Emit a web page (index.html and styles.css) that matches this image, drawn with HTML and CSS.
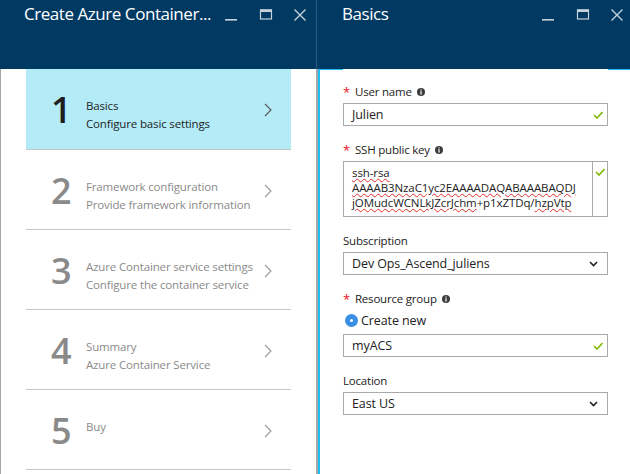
FILE: index.html
```html
<!DOCTYPE html>
<html lang="en">
<head>
<meta charset="utf-8">
<title>Create Azure Container Service</title>
<link rel="stylesheet" href="styles.css">
</head>
<body>
<div class="app">
  <section class="blade blade-steps">
    <header class="blade-header">
      <h1 class="blade-title">Create Azure Container...</h1>
      <div class="win-controls">
        <svg class="ctl ctl-min" width="14" height="14" viewBox="0 0 14 14"><rect x="1" y="11" width="12" height="1.6" fill="currentColor"/></svg>
        <svg class="ctl ctl-max" width="14" height="14" viewBox="0 0 14 14"><rect x="1.5" y="2" width="11" height="9" fill="none" stroke="currentColor" stroke-width="1.2"/><rect x="1" y="1.4" width="12" height="2.6" fill="currentColor"/></svg>
        <svg class="ctl ctl-close" width="14" height="14" viewBox="0 0 14 14"><path d="M1.5 1.5 L12.5 12.5 M12.5 1.5 L1.5 12.5" stroke="currentColor" stroke-width="1.4" fill="none"/></svg>
      </div>
    </header>
    <ol class="steps">
      <li class="step active">
        <span class="num">1</span>
        <div class="step-text"><div>Basics</div><div>Configure basic settings</div></div>
        <svg class="chev" width="8" height="14" viewBox="0 0 8 14"><path d="M1 1 L7 7 L1 13" fill="none" stroke="currentColor" stroke-width="1.1"/></svg>
      </li>
      <li class="step">
        <span class="num">2</span>
        <div class="step-text"><div>Framework configuration</div><div>Provide framework information</div></div>
        <svg class="chev" width="8" height="14" viewBox="0 0 8 14"><path d="M1 1 L7 7 L1 13" fill="none" stroke="currentColor" stroke-width="1.1"/></svg>
      </li>
      <li class="step">
        <span class="num">3</span>
        <div class="step-text"><div>Azure Container service settings</div><div>Configure the container service</div></div>
        <svg class="chev" width="8" height="14" viewBox="0 0 8 14"><path d="M1 1 L7 7 L1 13" fill="none" stroke="currentColor" stroke-width="1.1"/></svg>
      </li>
      <li class="step">
        <span class="num">4</span>
        <div class="step-text"><div>Summary</div><div>Azure Container Service</div></div>
        <svg class="chev" width="8" height="14" viewBox="0 0 8 14"><path d="M1 1 L7 7 L1 13" fill="none" stroke="currentColor" stroke-width="1.1"/></svg>
      </li>
      <li class="step">
        <span class="num">5</span>
        <div class="step-text"><div>Buy</div></div>
        <svg class="chev" width="8" height="14" viewBox="0 0 8 14"><path d="M1 1 L7 7 L1 13" fill="none" stroke="currentColor" stroke-width="1.1"/></svg>
      </li>
    </ol>
  </section>

  <div class="divider"></div>

  <section class="blade blade-form">
    <header class="blade-header blade-header-right">
      <h1 class="blade-title">Basics</h1>
      <div class="win-controls">
        <svg class="ctl ctl-min" width="14" height="14" viewBox="0 0 14 14"><rect x="1" y="11" width="12" height="1.6" fill="currentColor"/></svg>
        <svg class="ctl ctl-max" width="14" height="14" viewBox="0 0 14 14"><rect x="1.5" y="2" width="11" height="9" fill="none" stroke="currentColor" stroke-width="1.2"/><rect x="1" y="1.4" width="12" height="2.6" fill="currentColor"/></svg>
        <svg class="ctl ctl-close" width="14" height="14" viewBox="0 0 14 14"><path d="M1.5 1.5 L12.5 12.5 M12.5 1.5 L1.5 12.5" stroke="currentColor" stroke-width="1.4" fill="none"/></svg>
      </div>
    </header>
    <div class="blade-body">
      <div class="topline"></div>
      <div class="form">
        <div class="field">
          <div class="label"><span class="req">*</span>User name<svg class="info" width="8" height="8" viewBox="0 0 8 8"><circle cx="4" cy="4" r="4" fill="#3c3c3c"/><rect x="3.4" y="1.4" width="1.2" height="1.1" fill="#fff"/><rect x="3.4" y="3.2" width="1.2" height="3.4" fill="#fff"/></svg></div>
          <div class="input"><span class="val">Julien</span><svg class="check" width="10" height="8" viewBox="0 0 10 8"><path d="M1 4 L4 7 L9.5 1" fill="none" stroke="#7fba00" stroke-width="1.6"/></svg></div>
        </div>
        <div class="field">
          <div class="label"><span class="req">*</span>SSH public key<svg class="info" width="8" height="8" viewBox="0 0 8 8"><circle cx="4" cy="4" r="4" fill="#3c3c3c"/><rect x="3.4" y="1.4" width="1.2" height="1.1" fill="#fff"/><rect x="3.4" y="3.2" width="1.2" height="3.4" fill="#fff"/></svg></div>
          <div class="textarea">
            <div class="ta-text">
              <div class="ta-line"><span class="spell">ssh-rsa</span></div>
              <div class="ta-line"><span class="spell">AAAAB3NzaC1yc2EAAAADAQABAAABAQDJ</span></div>
              <div class="ta-line"><span class="spell">jOMudcWCNLkJZcrJchm</span>+p1xZTDq/<span class="spell">hzpVtp</span></div>
            </div>
            <div class="ta-check"><svg class="check" width="10" height="8" viewBox="0 0 10 8"><path d="M1 4 L4 7 L9.5 1" fill="none" stroke="#7fba00" stroke-width="1.6"/></svg></div>
          </div>
        </div>
        <div class="field">
          <div class="label">Subscription</div>
          <div class="input select"><span class="val">Dev Ops_Ascend_juliens</span><svg class="caret" width="9" height="6" viewBox="0 0 9 6"><path d="M1 1 L4.5 4.5 L8 1" fill="none" stroke="#222" stroke-width="1.6"/></svg></div>
        </div>
        <div class="field">
          <div class="label"><span class="req">*</span>Resource group<svg class="info" width="8" height="8" viewBox="0 0 8 8"><circle cx="4" cy="4" r="4" fill="#3c3c3c"/><rect x="3.4" y="1.4" width="1.2" height="1.1" fill="#fff"/><rect x="3.4" y="3.2" width="1.2" height="3.4" fill="#fff"/></svg></div>
          <div class="radio-row"><span class="radio"></span>Create new</div>
          <div class="input"><span class="val">myACS</span><svg class="check" width="10" height="8" viewBox="0 0 10 8"><path d="M1 4 L4 7 L9.5 1" fill="none" stroke="#7fba00" stroke-width="1.6"/></svg></div>
        </div>
        <div class="field">
          <div class="label">Location</div>
          <div class="input select"><span class="val">East US</span><svg class="caret" width="9" height="6" viewBox="0 0 9 6"><path d="M1 1 L4.5 4.5 L8 1" fill="none" stroke="#222" stroke-width="1.6"/></svg></div>
        </div>
      </div>
    </div>
  </section>
</div>
</body>
</html>
```

FILE: styles.css
```css
* {
  box-sizing: border-box;
  margin: 0;
  padding: 0;
}

body {
  width: 630px;
  height: 474px;
  overflow: hidden;
  background: #ffffff;
  font-family: "Open Sans", "Noto Sans", sans-serif;
  color: #222222;
}

.app {
  display: grid;
  grid-template-columns: 316px 2px 1fr;
  height: 474px;
}

.blade {
  display: flex;
  flex-direction: column;
  min-width: 0;
}

.blade-header {
  height: 69px;
  flex: none;
  background: #003a63;
  display: flex;
  align-items: flex-start;
  padding: 2px 9px 0 24px;
}

.blade-header-right {
  padding-right: 6px;
}

.blade-title {
  flex: 1;
  font-size: 17px;
  font-weight: 400;
  line-height: 24px;
  letter-spacing: -0.45px;
  color: #ffffff;
  white-space: nowrap;
}

.win-controls {
  display: flex;
  margin-top: 6px;
  color: #c5d1db;
}

.ctl-max {
  margin-left: 21px;
}

.ctl-close {
  margin-left: 20px;
}

/* Steps */
.steps {
  list-style: none;
  flex: 1;
  border-left: 1px solid #a6a6a6;
  padding: 0 25px 0 25px;
}

.step {
  height: 80px;
  display: flex;
  align-items: flex-start;
  border-bottom: 1px solid #c8c8c8;
  padding-left: 25px;
  color: #8a8a8a;
}

.step:first-child {
  height: 81px;
}

.step.active {
  background: #b3ebf7;
  color: #1e1e1e;
}

.num {
  width: 35px;
  margin-top: 23px;
  font-size: 36px;
  font-weight: 600;
  line-height: 36px;
}

.step-text {
  flex: 1;
  margin-top: 28px;
  font-size: 11.5px;
  line-height: 18px;
  letter-spacing: -0.15px;
  white-space: nowrap;
}

.chev {
  flex: none;
  margin-top: 34px;
  margin-right: 19px;
  color: #9a9a9a;
}

.step.active .chev {
  color: #555555;
}

/* Divider */
.divider {
  background: #a6a6a6;
  position: relative;
}

.divider::before {
  content: "";
  position: absolute;
  left: 0;
  top: 0;
  width: 2px;
  height: 69px;
  background: #003a63;
  border-left: 1px solid #2c5b81;
}

/* Form blade */
.blade-body {
  flex: 1;
  border-left: 2px solid #1fbff0;
}

.topline {
  height: 1px;
  background: linear-gradient(to right, #1fbff0 0, #1fbff0 23px, transparent 23px, transparent calc(100% - 22px), #1fbff0 calc(100% - 22px));
}

.form {
  padding: 14px 22px 0 23px;
}

.field {
  margin-bottom: 16px;
}

.label {
  display: flex;
  align-items: center;
  font-size: 11.5px;
  line-height: 16px;
  letter-spacing: -0.2px;
  color: #222222;
}

.req {
  color: #e81123;
  font-size: 13px;
  margin-right: 5px;
}

.info {
  margin-left: 5px;
}

.input {
  margin-top: 3px;
  height: 23px;
  border: 1px solid #a9a9a9;
  display: flex;
  align-items: center;
  padding: 0 4px 0 8px;
  font-size: 12.5px;
  letter-spacing: -0.1px;
  color: #222222;
}

.input .val {
  flex: 1;
  white-space: nowrap;
}

.select {
  padding-right: 9px;
}

.textarea {
  margin-top: 3px;
  height: 56px;
  border: 1px solid #a9a9a9;
  display: flex;
}

.ta-text {
  flex: 1;
  border-right: 1px solid #a9a9a9;
  padding: 3px 0 0 8px;
  font-size: 11.5px;
  line-height: 15px;
  letter-spacing: -0.1px;
  white-space: nowrap;
  overflow: hidden;
  color: #222222;
}

.ta-line {
  height: 15px;
}

.spell {
  text-decoration: underline wavy #e0302a;
  text-decoration-thickness: 1px;
  text-underline-offset: 1px;
}

.ta-check {
  width: 14px;
  padding-top: 6px;
  display: flex;
  justify-content: center;
  align-items: flex-start;
}

.radio-row {
  margin-top: 3px;
  height: 21px;
  display: flex;
  align-items: center;
  font-size: 12.5px;
  letter-spacing: -0.1px;
  color: #222222;
}

.radio {
  width: 13px;
  height: 13px;
  margin: 0 3px 0 2px;
  border-radius: 50%;
  background: #3a8ee6;
  display: flex;
  align-items: center;
  justify-content: center;
}

.radio::after {
  content: "";
  width: 3px;
  height: 3px;
  border-radius: 50%;
  background: #ffffff;
}
```
